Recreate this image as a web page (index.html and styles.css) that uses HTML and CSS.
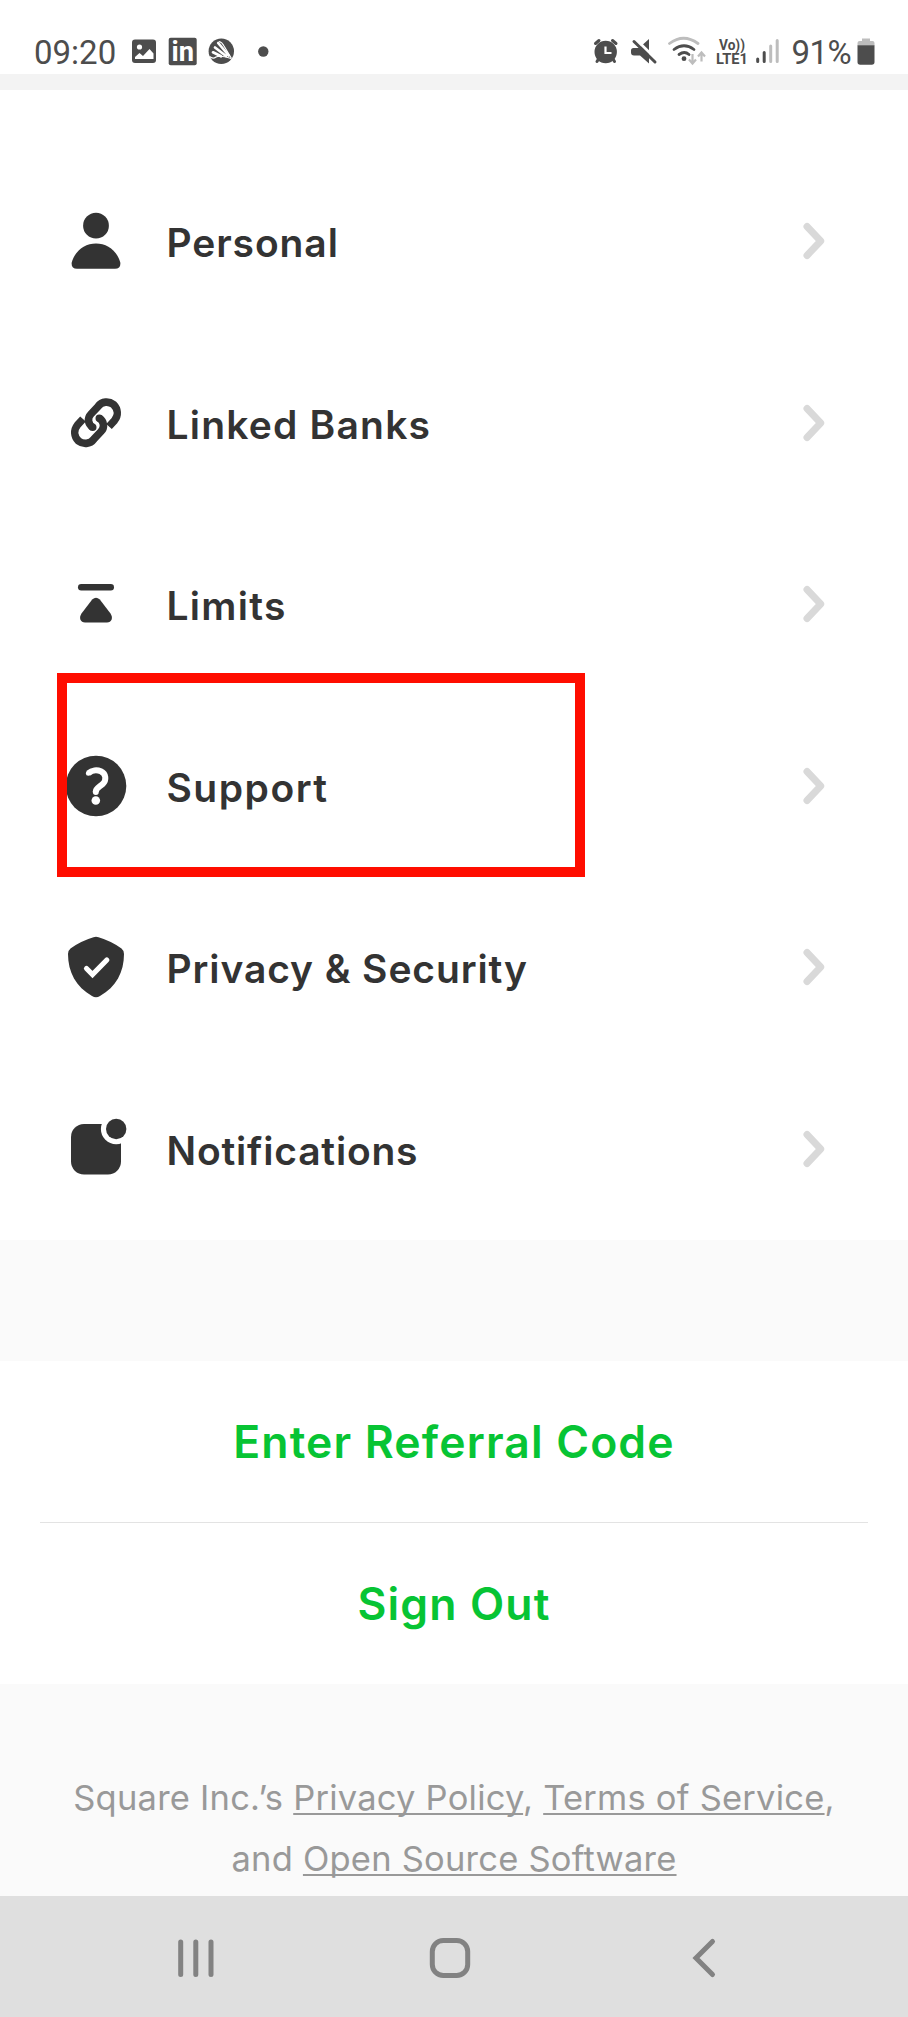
FILE: index.html
```html
<!DOCTYPE html>
<html lang="en">
<head>
<meta charset="utf-8">
<title>Account settings</title>
<link rel="stylesheet" href="styles.css">
</head>
<body>
<div class="screen">
  <header class="status">
    <span class="clock">09:20</span>
    <svg class="status-left" width="140" height="40" viewBox="130 32 140 40">
      <rect x="132" y="39.5" width="24" height="23.5" rx="3" fill="#4d4d4d"/>
      <circle cx="139.5" cy="47" r="2.6" fill="#fff"/>
      <path d="M135 59V57l4.500-4 3.500 3 6.500-7 4 4.500V59z" fill="#fff"/>
      <rect x="168.700" y="37.700" width="28" height="27.600" rx="2" fill="#4d4d4d"/>
      <text x="171.500" y="61" class="in-mark" textLength="22.500" lengthAdjust="spacingAndGlyphs">in</text>
      <circle cx="221.300" cy="51.300" r="12.700" fill="#4d4d4d"/>
      <path d="M218.200 43l10.500 12.500M215 47.500l11 8.500M213 52.300l8 4" fill="none" stroke="#fff" stroke-width="2.700" stroke-linecap="round"/>
      <path d="M219 41.500Q222 42 224 46L231.500 58.500" fill="none" stroke="#fff" stroke-width="1.200"/>
      <path d="M209.500 56.500Q213 59.500 216 57Q220 55 231 58.500" fill="none" stroke="#fff" stroke-width="1.200"/>
      <circle cx="263.300" cy="51.500" r="5.200" fill="#4d4d4d"/>
    </svg>
    <svg class="status-right" width="126" height="40" viewBox="590 32 126 40">
      <g fill="none" stroke="#4d4d4d" stroke-width="3" stroke-linecap="round">
        <circle cx="604.700" cy="52" r="9.700" fill="#4d4d4d"/>
        <path d="M594.500 43.500l3.500-3M615 43.500l-3.500-3M597.500 59l-1.500 2.500M612 59l1.500 2.500"/>
      </g>
      <path d="M604.500 46.500v6.500h6" fill="none" stroke="#fff" stroke-width="2.200"/>
      <path d="M631 48h7l10-9v24.500l-9-8h-6q-3 0-3-3v-2q0-2.500 2.500-2.500z" fill="#4d4d4d"/>
      <path d="M633 37.500l24 23.500" stroke="#fff" stroke-width="3"/>
      <path d="M633 41.500l21 20.500" stroke="#4d4d4d" stroke-width="3" stroke-linecap="round"/>
      <g fill="none" stroke-width="2.800" stroke-linecap="round">
        <path d="M668.500 43.500q14-10.500 28.500 0" stroke="#bdbdbd"/>
        <path d="M673 49.500q10-7.500 20 0M678 54.500q5.500-4 10 0" stroke="#4d4d4d"/>
      </g>
      <circle cx="683" cy="58.700" r="2.400" fill="#4d4d4d"/>
      <path d="M691.500 54v9m-3.500-3.500l3.500 4 3.500-4M700.500 61.500v-8m-3.500 3l3.500-4 3.500 4" fill="none" stroke="#bdbdbd" stroke-width="2.200"/>
    </svg>
    <svg class="status-net" width="66" height="40" viewBox="714 32 66 40">
      <text x="718" y="49.700" class="net-label" textLength="26" lengthAdjust="spacingAndGlyphs">Vo))</text>
      <text x="715" y="64" class="net-label" textLength="32" lengthAdjust="spacingAndGlyphs">LTE1</text>
      <g stroke-width="3" stroke-linecap="round">
        <path d="M756.700 59v2.500M763.200 52.500v9" stroke="#4d4d4d"/>
        <path d="M769.700 46v15.500M776.200 40.500v21" stroke="#bdbdbd"/>
      </g>
    </svg>
    <span class="percent">91%</span>
    <svg class="battery" width="18" height="40" viewBox="856.500 32 18 40">
      <path d="M861.500 38.500h8v2.500h2.500q2 0 2 2v2.500h-17V43q0-2 2-2h2.500z" fill="#bdbdbd"/>
      <path d="M857 45.300h17V62q0 2.700-2.700 2.700h-11.600Q857 64.700 857 62z" fill="#4d4d4d"/>
    </svg>
  </header>

  <nav class="menu">
    <a class="row">
      <svg class="icon" viewBox="0 0 60 60"><circle cx="30" cy="14.700" r="12.900" /><path d="M30 32.500C41 32.500 51 39.500 54.300 51.500Q55 57.700 49 57.700H11Q5 57.700 5.700 51.500C9 39.500 19 32.500 30 32.500z"/></svg>
      <span class="label personal">Personal</span>
      <svg class="chev" viewBox="0 0 24 38"><path d="M5 4.500L18.700 19 5 33.500"/></svg>
    </a>
    <a class="row">
      <svg class="icon" viewBox="0 0 60 60">
        <g fill="none" stroke="#333" stroke-width="7.600">
          <path d="M26.700 34.300C21.700 31 21.200 25 25 21L32 13.500C36 8 43 8 47.500 11.500C52 16 52.500 22.500 48.500 27.500L43 33.500"/>
          <path d="M33.300 25.200C38.300 28.500 38.800 34.500 35 38.500L28 46C24 51.500 17 51.500 12.500 48C8 43.500 7.500 37 11.500 32L17 26"/>
          <path d="M26.700 34.300h.01M33.300 25.200h.01" stroke-linecap="round"/>
        </g>
      </svg>
      <span class="label banks">Linked Banks</span>
      <svg class="chev" viewBox="0 0 24 38"><path d="M5 4.500L18.700 19 5 33.500"/></svg>
    </a>
    <a class="row">
      <svg class="icon" viewBox="0 0 60 60"><rect x="12" y="10" width="36" height="6.500" rx="3.200"/><path d="M26.200 25.500Q30 21.800 33.800 25.500L44.500 39.500C47.500 44 45.500 48.500 41 48.500H19C14.500 48.500 12.500 44 15.500 39.500z"/></svg>
      <span class="label limits">Limits</span>
      <svg class="chev" viewBox="0 0 24 38"><path d="M5 4.500L18.700 19 5 33.500"/></svg>
    </a>
    <a class="row">
      <svg class="icon" viewBox="0 0 60 60"><circle cx="30" cy="30" r="30.300"/><path d="M22.400 17.300C26 14 31 13.600 34.800 15.300C40.300 18 40.500 24 37 27.700C33.500 31 29.800 31.500 29.800 36" fill="none" stroke="#fff" stroke-width="6"/><circle cx="22.400" cy="17.300" r="2.500" fill="#fff"/><circle cx="29.800" cy="36" r="3" fill="#fff"/><circle cx="29.800" cy="44.500" r="4.300" fill="#fff"/></svg>
      <span class="label support">Support</span>
      <svg class="chev" viewBox="0 0 24 38"><path d="M5 4.500L18.700 19 5 33.500"/></svg>
      <span class="highlight"></span>
    </a>
    <a class="row">
      <svg class="icon" viewBox="0 0 60 60"><path d="M27.500.3Q30-.8 32.500.3Q45 4 55.500 11.500Q58 13.500 58 17C58 35 50 50 34 59Q30 61.500 26 59C10 50 2 35 2 17Q2 13.500 4.500 11.500Q15 4 27.500.3z"/><path d="M20.500 31.500l6 6L40.800 23" fill="none" stroke="#fff" stroke-width="5.200" stroke-linecap="round"/></svg>
      <span class="label privacy">Privacy &amp; Security</span>
      <svg class="chev" viewBox="0 0 24 38"><path d="M5 4.500L18.700 19 5 33.500"/></svg>
    </a>
    <a class="row">
      <svg class="icon" viewBox="0 0 60 60"><rect x="5" y="5" width="50" height="50.500" rx="13"/><circle cx="50.200" cy="10" r="15.300" fill="#fff"/><circle cx="50.200" cy="10" r="10.200"/></svg>
      <span class="label notifications">Notifications</span>
      <svg class="chev" viewBox="0 0 24 38"><path d="M5 4.500L18.700 19 5 33.500"/></svg>
    </a>
  </nav>

  <section class="actions">
    <a class="action">Enter Referral Code</a>
    <div class="divider"></div>
    <a class="action">Sign Out</a>
  </section>

  <footer class="legal">
    <p>Square Inc.’s <u>Privacy Policy</u>, <u>Terms of Service</u>,</p>
    <p>and <u>Open Source Software</u></p>
  </footer>

  <div class="navbar">
    <svg width="908" height="121" viewBox="0 1896 908 121" fill="none" stroke="#828282" stroke-width="5" stroke-linecap="round">
      <path d="M180.700 1942v32.500M195.800 1942v32.500M211 1942v32.500"/>
      <rect x="432.300" y="1940.500" width="35.400" height="35" rx="11"/>
      <path d="M712.500 1941.500L696 1958l16.500 16.500"/>
    </svg>
  </div>
</div>
</body>
</html>
```
FILE: styles.css
```css
body { margin: 0; }
.screen {
  width: 908px;
  height: 2017px;
  display: flex;
  flex-direction: column;
  overflow: hidden;
  background: #fafafa;
  font-family: Inter, "Open Sans", sans-serif;
}
.screen svg { display: block; flex: none; }

.status {
  box-sizing: border-box;
  height: 90px;
  padding: 32px 33px 0 34px;
  display: flex;
  align-items: flex-start;
  border-bottom: 16px solid #f3f3f3;
  background: #fff;
  font-family: Roboto, sans-serif;
  font-size: 33px;
  line-height: 42px;
  color: #4d4d4d;
}
.clock { width: 96px; white-space: nowrap; }
.status-right { margin-left: auto; }
.status-net { margin-left: -2px; }
.percent { width: 65.5px; margin-left: 11px; letter-spacing: -0.6px; white-space: nowrap; }
.in-mark { font: 700 27px Roboto, sans-serif; fill: #fff; }
.net-label { font: 700 15px Roboto, sans-serif; fill: #4d4d4d; }

.menu {
  box-sizing: border-box;
  height: 1150px;
  padding-top: 60.5px;
  background: #fff;
}
.row {
  position: relative;
  height: 181.5px;
  padding: 0 82px 0 66px;
  display: flex;
  align-items: center;
}
.icon { width: 60px; height: 60px; fill: #333; overflow: visible; }
.label {
  margin-left: 40.5px;
  padding-top: 4px;
  flex: 1;
  font-size: 39px;
  line-height: 48px;
  font-weight: 600;
  color: #333;
  white-space: nowrap;
}
.personal { letter-spacing: 0.9px; }
.banks { letter-spacing: 1.2px; }
.limits { letter-spacing: 1.3px; }
.support { letter-spacing: 1.5px; }
.privacy { letter-spacing: 0.9px; }
.notifications { letter-spacing: 0.8px; }
.chev { width: 24px; height: 38px; fill: none; stroke: #d9d9d9; stroke-width: 7px; stroke-linecap: round; stroke-linejoin: round; }
.highlight {
  position: absolute;
  left: 57px;
  top: -22px;
  box-sizing: border-box;
  width: 528px;
  height: 204px;
  border: 10px solid #ff0d00;
}

.actions { margin-top: 121px; height: 323px; background: #fff; }
.action {
  box-sizing: border-box;
  height: 161px;
  padding-top: 1px;
  display: flex;
  align-items: center;
  justify-content: center;
  font-size: 44.5px;
  font-weight: 600;
  letter-spacing: 1.15px;
  color: #07c434;
  white-space: nowrap;
}
.divider { height: 1px; margin: 0 40px; background: #e3e3e3; }

.legal {
  height: 122px;
  padding: 82.5px 0 7.5px;
  text-align: center;
  font-size: 34.5px;
  line-height: 61.5px;
  letter-spacing: 0.22px;
  color: #999;
  white-space: nowrap;
}
.legal p { margin: 0; }
.legal u { text-decoration-thickness: 2px; text-underline-offset: 3px; text-decoration-skip-ink: none; }
.navbar { height: 121px; background: #dfdfdf; }
```
